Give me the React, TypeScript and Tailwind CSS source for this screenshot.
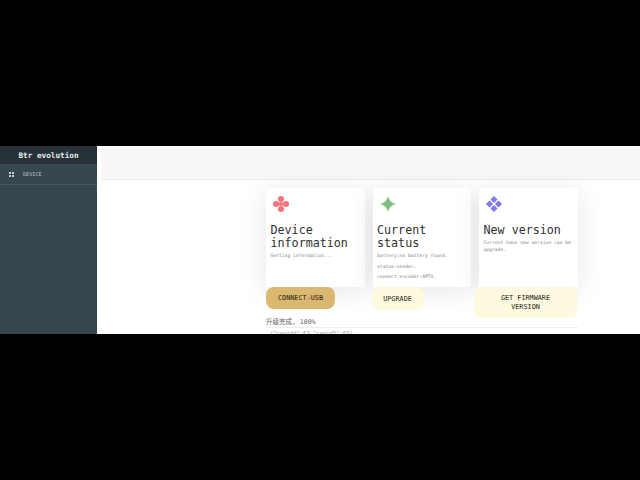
const mono = "font-['DejaVu_Sans_Mono','Liberation_Mono',monospace]";

function Card({ className, icon, title, children }: { className: string; icon: React.ReactNode; title: React.ReactNode; children: React.ReactNode }) {
  return (
    <div className={`h-[99px] bg-white px-[4.5px] pt-[7px] shadow-[0_4px_26px_rgba(0,0,0,0.1)] ${className}`}>
      <div className="ml-[1.5px] h-[18px] w-[18px]">{icon}</div>
      <div className="mt-[11px] text-[11.7px] leading-[13px] text-[#2f2f2f]">{title}</div>
      <div className="mt-[3px] text-[4.7px] leading-[6.5px] text-[#808080]">{children}</div>
    </div>
  );
}

export default function App() {
  return (
    <div className={`flex h-[480px] w-[640px] flex-col justify-start bg-black pt-[146px] ${mono}`}>
      <div className="flex h-[188px] overflow-hidden bg-white">
        <aside className="w-[97px] shrink-0 bg-[#37474f]">
          <div className="flex h-[18px] items-center justify-center bg-[#263238] pt-[1px] text-[7.7px] font-bold text-[#e8ecee]">
            Btr evolution
          </div>
          <div className="flex h-[21px] items-center border-b border-[#455a64] pl-[9px] pt-[1px] text-[5.2px] text-[#b7c2c7]">
            <svg width="5" height="5" viewBox="0 0 5 5" className="mr-[9px]">
              <path d="M0 0h2v2H0zM3 0h2v2H3zM0 3h2v2H0zM3 3h2v2H3z" fill="#c9d2d6" />
            </svg>
            DEVICE
          </div>
        </aside>
        <main className="min-w-0 flex-1">
          <div className="ml-[4px] mt-[2px] h-[32px] border-b border-[#e9e9e9] bg-[#f8f8f8]" />
          <div className="ml-[169px] mt-[8px] w-[312px]">
            <div className="flex items-start gap-[8px]">
              <div className="w-[98.5px]">
                <Card
                  className="w-[98.5px]"
                  title={<>Device<br />information</>}
                  icon={
                    <svg viewBox="0 0 20 20" className="h-[18px] w-[18px]" fill="#f0757c">
                      <circle cx="10" cy="4.5" r="3.4" /><circle cx="10" cy="15.5" r="3.4" />
                      <circle cx="4.5" cy="10" r="3.4" /><circle cx="15.5" cy="10" r="3.4" />
                      <rect x="8" y="8" width="4" height="4" />
                    </svg>
                  }
                >
                  Getting information...
                </Card>
                <button className="flex h-[22px] w-[69px] items-center justify-center rounded-[8px] bg-[#dab86f] pt-[1px] text-[6.8px] text-[#1f1c14]">
                  CONNECT-USB
                </button>
              </div>
              <div className="w-[98.5px]">
                <Card
                  className="w-[98.5px]"
                  title={<>Current<br />status</>}
                  icon={
                    <svg viewBox="0 0 20 20" className="h-[18px] w-[18px]" fill="#7fbf82">
                      <path d="M10 1 C11 6 14 9 19 10 C14 11 11 14 10 19 C9 14 6 11 1 10 C6 9 9 6 10 1Z" />
                    </svg>
                  }
                >
                  <div>battery:no battery found.</div>
                  <div className="mt-[4px]">status:sender.</div>
                  <div className="mt-[4px]">connect encoder:APTX.</div>
                </Card>
                <button className="-ml-[1px] flex h-[23px] w-[52px] items-center justify-center rounded-[7px] bg-[#fefadf] pt-[1px] text-[6.8px] text-[#1f1c14]">
                  UPGRADE
                </button>
              </div>
              <div className="w-[99px]">
                <Card
                  className="w-[99px]"
                  title="New version"
                  icon={
                    <svg viewBox="0 0 20 20" className="h-[18px] w-[18px]" fill="#7f79ea">
                      <path d="M10 1l4 4-4 4-4-4zM5 6l4 4-4 4-4-4zM15 6l4 4-4 4-4-4zM10 11l4 4-4 4-4-4z" />
                    </svg>
                  }
                >
                  Current have new version can be upgrade.
                </Card>
                <button className="-ml-[5px] flex h-[31px] w-[103px] items-center justify-center rounded-[6px] bg-[#fefadf] px-[16px] pt-[1px] text-center text-[6.8px] leading-[9px] text-[#1f1c14]">
                  GET FIRMWARE VERSION
                </button>
              </div>
            </div>
            <div className="-mt-[1px] text-[6.5px] leading-[10px] text-[#666]" style={{ fontFamily: "'DejaVu Sans Mono','Noto Sans CJK SC',monospace" }}>
              升级完成, 100%
            </div>
            <div className="border-t border-[#eee] pl-[4px] pt-[1px] text-[5.5px] leading-[8px] text-[#999]">
              {'{"ceoid0":63,"ceoid5":65}'}
            </div>
          </div>
        </main>
      </div>
    </div>
  );
}
